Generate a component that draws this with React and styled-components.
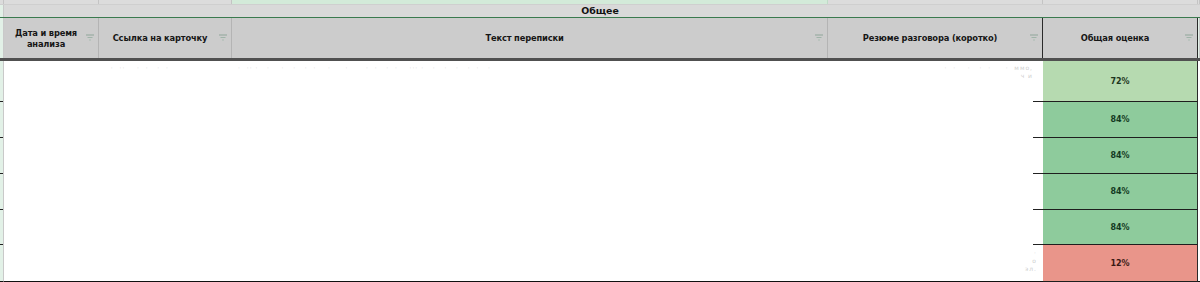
import React from "react";
import styled, { createGlobalStyle } from "styled-components";

const Global = createGlobalStyle`
  html, body { margin: 0; padding: 0; background: #fff; }
  body { font-family: "DejaVu Sans", "Open Sans", sans-serif; }
`;

const COLS = "4px 95px 133px 596px 215px 155px 2px";

const Sheet = styled.div`
  width: 1200px;
  height: 282px;
  overflow: hidden;
  background: #fff;
  display: flex;
  flex-direction: column;
`;

const TopStrip = styled.div`
  display: grid;
  grid-template-columns: ${COLS};
  height: 4px;
`;

const StripCell = styled.div`
  background: ${(p) => (p.$sel ? "#d3ead9" : "#dcdcdc")};
  border-right: 1px solid ${(p) => (p.$sel ? "#bfdcc7" : "#c4c4c4")};
`;

const GroupRow = styled.div`
  display: grid;
  grid-template-columns: 4px 1fr;
  height: 12px;
  background: #d9d9d9;
  border-bottom: 1px solid #3a7a4e;
  border-top: 1px solid #cfcfcf;
`;

const Corner = styled.div`
  background: #e2f1e7;
  border-right: 1px solid #c9c9c9;
`;

const GroupTitle = styled.div`
  font-family: "DejaVu Sans", sans-serif;
  font-weight: 700;
  font-size: 9.4px;
  line-height: 12px;
  color: #111;
  text-align: center;
  padding-right: 4px;
`;

const HeaderRow = styled.div`
  display: grid;
  grid-template-columns: ${COLS};
  height: 40px;
  background: #cccccc;
  border-bottom: 3px solid #505050;
`;

const HeadCell = styled.div`
  position: relative;
  display: flex;
  align-items: center;
  justify-content: center;
  text-align: center;
  padding: 1px 14px 0 4px;
  font-weight: 700;
  font-size: 8.3px;
  line-height: 11px;
  letter-spacing: -0.15px;
  color: #161616;
  border-right: 1px solid ${(p) => (p.$dark ? "#2a2a2a" : "#b4b4b4")};
`;

const FilterIcon = styled.svg`
  position: absolute;
  right: 4px;
  top: 50%;
  margin-top: -4px;
  width: 8px;
  height: 7px;
`;

const Filter = () => (
  <FilterIcon viewBox="0 0 8 7">
    <rect x="0" y="0.5" width="8" height="1" fill="#8fa69a" />
    <rect x="1.5" y="3" width="5" height="1" fill="#9fb4a8" />
    <rect x="3" y="5.5" width="2" height="1" fill="#a9bcb1" />
  </FilterIcon>
);

const Body = styled.div`
  display: flex;
  flex-direction: column;
`;

const Row = styled.div`
  display: grid;
  grid-template-columns: ${COLS};
  height: ${(p) => p.$h}px;
`;

const RowHead = styled.div`
  background: #e2f1e7 linear-gradient(#222, #222) no-repeat right bottom / 3px 1px;
  border-right: 1px solid #c9c9c9;
  ${(p) => (p.$last ? "background: #e2f1e7; border-bottom: 1px solid #111;" : "")}
`;

const Cell = styled.div`
  background: #fff;
  position: relative;
  overflow: hidden;
  ${(p) => (p.$last ? "border-bottom: 1px solid #111;" : "")}
  ${(p) =>
    p.$tick
      ? "background: #fff linear-gradient(#222,#222) no-repeat right bottom / 10px 1px;"
      : ""}
`;

const Faint = styled.div`
  font-size: 6px;
  line-height: 8px;
  color: #cfcfcf;
  white-space: pre;
  padding: ${(p) => p.$pad || "3px 6px"};
  text-align: ${(p) => p.$align || "left"};
  letter-spacing: 1px;
`;

const Score = styled.div`
  background: ${(p) => p.$bg};
  border-bottom: 1.5px solid #1e1e1e;
  border-right: 1px solid #2a2a2a;
  display: flex;
  align-items: center;
  justify-content: center;
  font-weight: 700;
  font-size: 8px;
  color: ${(p) => p.$fg};
`;

const Tail = styled.div`
  background: #fff;
  ${(p) => (p.$last ? "border-bottom: 1px solid #111;" : "")}
`;

const rows = [
  { h: 41, v: "72%", bg: "#b6dab0", fg: "#1d3520" },
  { h: 36, v: "84%", bg: "#8ecb9c", fg: "#133a22" },
  { h: 36, v: "84%", bg: "#8ecb9c", fg: "#133a22" },
  { h: 36, v: "84%", bg: "#8ecb9c", fg: "#133a22" },
  { h: 35, v: "84%", bg: "#8ecb9c", fg: "#133a22" },
  { h: 37, v: "12%", bg: "#e9958a", fg: "#3a1a15", last: true },
];

export default function App() {
  return (
    <Sheet>
      <Global />
      <TopStrip>
        <StripCell />
        <StripCell />
        <StripCell />
        <StripCell $sel />
        <StripCell />
        <StripCell />
        <StripCell />
      </TopStrip>
      <GroupRow>
        <Corner />
        <GroupTitle>Общее</GroupTitle>
      </GroupRow>
      <HeaderRow>
        <Corner />
        <HeadCell>
          Дата и время
          <br />
          анализа
          <Filter />
        </HeadCell>
        <HeadCell>
          Ссылка на карточку
          <Filter />
        </HeadCell>
        <HeadCell>
          Текст переписки
          <Filter />
        </HeadCell>
        <HeadCell $dark>
          Резюме разговора (коротко)
          <Filter />
        </HeadCell>
        <HeadCell $dark>
          Общая оценка
          <Filter />
        </HeadCell>
        <Corner />
      </HeaderRow>
      <Body>
        {rows.map((r, i) => (
          <Row key={i} $h={r.h}>
            <RowHead $last={r.last} />
            <Cell $last={r.last} />
            <Cell $last={r.last}>
              {i === 0 && <Faint>{"  ·  ··    ·  ·   ·  ·"}</Faint>}
            </Cell>
            <Cell $last={r.last}>
              {i === 0 && (
                <Faint>
                  {"·  ·· ·   ·    ·   ·   ·  ·    ·     ·      ·  ·   ·  ·    ··· ·   ·   ·   ·   ·  ·   ·"}
                </Faint>
              )}
            </Cell>
            <Cell $last={r.last} $tick={!r.last}>
              {i === 0 && (
                <Faint $align="right" $pad="3px 10px">
                  {"·  ·    ·   ·  ·     ·  ммо,\nч и"}
                </Faint>
              )}
              {r.last && (
                <Faint $align="right" $pad="4px 6px">
                  {"·\nо\nэл."}
                </Faint>
              )}
            </Cell>
            <Score $bg={r.bg} $fg={r.fg}>
              {r.v}
            </Score>
            <Tail $last={r.last} />
          </Row>
        ))}
      </Body>
    </Sheet>
  );
}
